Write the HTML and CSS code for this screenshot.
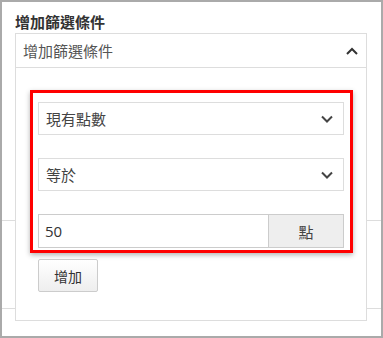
FILE: index.html
```html
<!DOCTYPE html>
<html lang="zh-Hant">
<head>
    <meta charset="UTF-8">
    <meta name="viewport" content="width=device-width, initial-scale=1.0">
    <title>增加篩選條件</title>
    <link rel="stylesheet" href="styles.css">
</head>
<body>
    <div class="frame">
        <div class="title">增加篩選條件</div>
        <div class="panel">
            <div class="panel-head">
                <span>增加篩選條件</span>
                <svg class="chev" width="12" height="8" viewBox="0 0 12 8"><path d="M1 7 L6 2 L11 7" fill="none" stroke="#333" stroke-width="2"/></svg>
            </div>
            <div class="panel-body">
                <div class="highlight">
                    <div class="select">
                        <span>現有點數</span>
                        <svg width="12" height="8" viewBox="0 0 12 8"><path d="M1 1.5 L6 6.5 L11 1.5" fill="none" stroke="#444" stroke-width="2"/></svg>
                    </div>
                    <div class="select">
                        <span>等於</span>
                        <svg width="12" height="8" viewBox="0 0 12 8"><path d="M1 1.5 L6 6.5 L11 1.5" fill="none" stroke="#444" stroke-width="2"/></svg>
                    </div>
                    <div class="input-group">
                        <div class="input">50</div>
                        <div class="addon">點</div>
                    </div>
                </div>
                <button class="btn">增加</button>
            </div>
        </div>
    </div>
</body>
</html>
```

FILE: styles.css
```css
body {
    margin: 0;
    font-family: "Open Sans", "Noto Sans CJK TC", sans-serif;
    color: #333;
}

.frame {
    height: 338px;
    box-sizing: border-box;
    border: 2px solid #aaa;
    padding: 10px 0 0 13px;
    background-image:
        linear-gradient(#ddd, #ddd),
        linear-gradient(#ddd, #ddd);
    background-size: 100% 1px, 100% 1px;
    background-position: 0 218px, 0 306px;
    background-repeat: no-repeat;
}

.title {
    font-size: 15px;
    font-weight: bold;
    line-height: 20px;
    color: #333;
    margin-bottom: 1px;
}

.panel {
    width: 352px;
    height: 288px;
    box-sizing: border-box;
    border: 1px solid #ddd;
    background: #fff;
}

.panel-head {
    height: 33px;
    border-bottom: 1px solid #ddd;
    display: flex;
    align-items: center;
    justify-content: space-between;
    padding: 0 8px 0 7px;
    font-size: 15px;
    color: #555;
}

.panel-body {
    padding: 22px 0 0 14px;
}

.highlight {
    width: 306px;
    border: 3px solid #f00;
    padding: 9px 6px 2px 5px;
    box-shadow: 0 2px 5px rgba(0, 0, 0, 0.3);
    display: flex;
    flex-direction: column;
    gap: 23px;
}

.select {
    height: 33px;
    box-sizing: border-box;
    border: 1px solid #ddd;
    display: flex;
    align-items: center;
    justify-content: space-between;
    padding: 0 10px 0 7px;
    font-size: 15px;
    color: #444;
}

.input-group {
    display: flex;
    height: 34px;
    box-sizing: border-box;
    border: 1px solid #ccc;
}

.input {
    flex: 1;
    display: flex;
    align-items: center;
    padding-left: 6px;
    font-size: 15px;
    color: #333;
}

.addon {
    width: 74px;
    border-left: 1px solid #ccc;
    background: #eee;
    display: flex;
    align-items: center;
    justify-content: center;
    font-size: 15px;
    color: #444;
}

.btn {
    margin: 6px 0 0 8px;
    width: 60px;
    height: 33px;
    border: 1px solid #ccc;
    border-radius: 2px;
    background: linear-gradient(#fff, #eee);
    font-family: "Open Sans", "Noto Sans CJK TC", sans-serif;
    font-size: 14px;
    color: #333;
    padding: 0;
}
```
